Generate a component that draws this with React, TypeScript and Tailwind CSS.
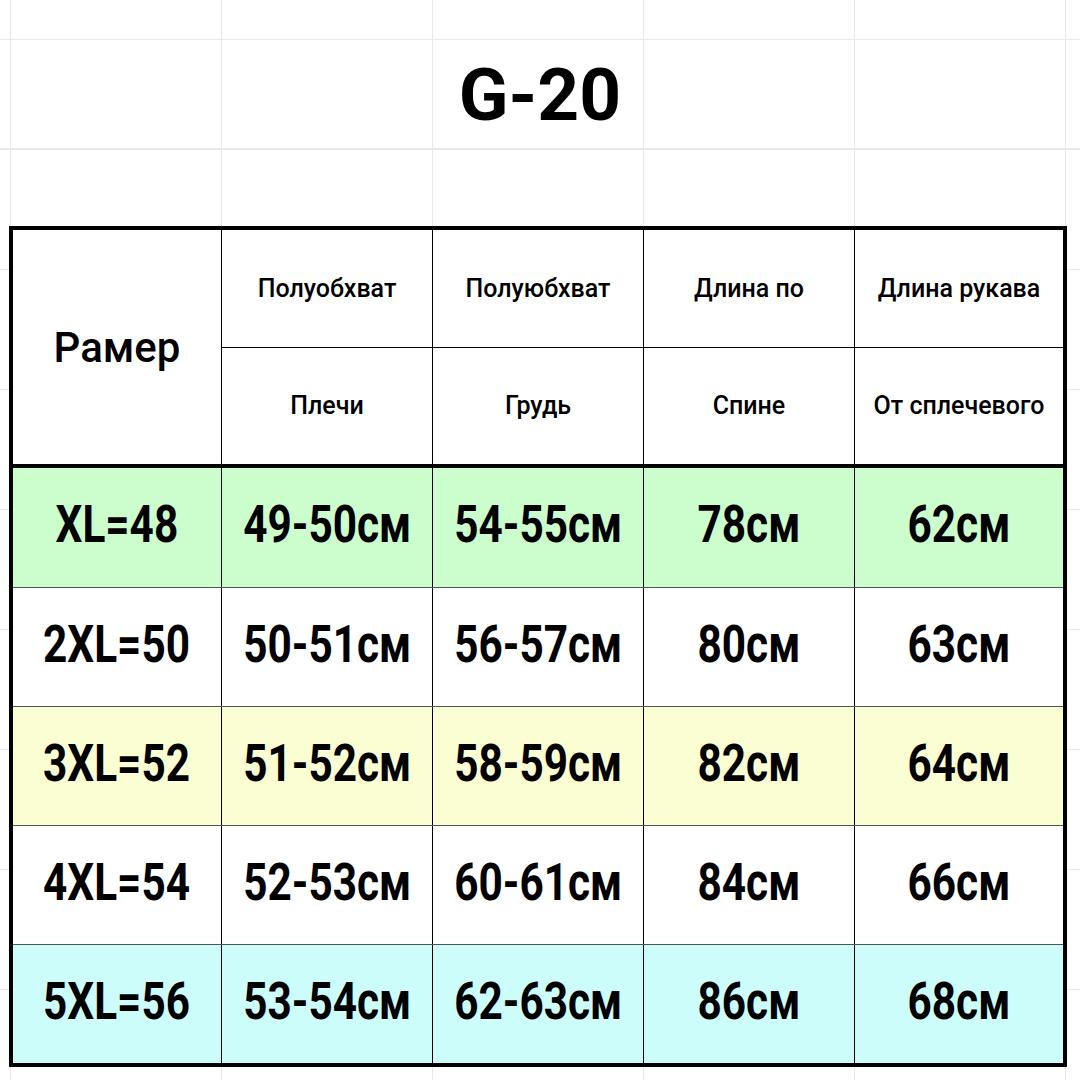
const rows = [
  { size: "XL=48", values: ["49-50см", "54-55см", "78см", "62см"], bg: "bg-[#ccfdcc]" },
  { size: "2XL=50", values: ["50-51см", "56-57см", "80см", "63см"], bg: "bg-white" },
  { size: "3XL=52", values: ["51-52см", "58-59см", "82см", "64см"], bg: "bg-[#fbfdd2]" },
  { size: "4XL=54", values: ["52-53см", "60-61см", "84см", "66см"], bg: "bg-white" },
  { size: "5XL=56", values: ["53-54см", "62-63см", "86см", "68см"], bg: "bg-[#cdfdfb]" },
]

const headers = [
  ["Полуобхват", "Плечи"],
  ["Полуюбхват", "Грудь"],
  ["Длина по", "Спине"],
  ["Длина рукава", "От сплечевого"],
]

const cols = "grid grid-cols-[208px_211px_211px_211px_209px]"

export default function App() {
  return (
    <div
      className="w-[1080px] h-[1080px] overflow-hidden bg-white text-black bg-[linear-gradient(to_right,#e9e9e9_1px,transparent_1px)] bg-[size:211px_100%] bg-[position:10px_0]"
      style={{ fontFamily: "Roboto, 'Noto Sans', sans-serif" }}
    >
      {/* sheet rows above the table */}
      <div className="h-[40px] border-b border-[#e9e9e9]" />
      <div className="h-[109px] border-b border-[#e9e9e9] flex items-center justify-center">
        <h1 className="text-[73px] font-bold leading-none pt-[2px]">G-20</h1>
      </div>

      <div className="pt-[77px] h-[931px] bg-[linear-gradient(to_bottom,#e9e9e9_1px,transparent_1px)] bg-[size:100%_120px] bg-[position:0_0]">
        <div className="ml-[9px] w-[1058px] border-4 border-black bg-white">
          {/* header */}
          <div className={`${cols} h-[238px] border-b-4 border-black`}>
            <div className="flex items-center justify-center">
              <span className="text-[42px] font-medium">Рамер</span>
            </div>
            {headers.map(([top, bottom]) => (
              <div key={top} className="flex flex-col border-l border-black">
                <div className="flex-1 flex items-center justify-center border-b border-black">
                  <span className="text-[25px] font-medium">{top}</span>
                </div>
                <div className="flex-1 flex items-center justify-center">
                  <span className="text-[25px] font-medium">{bottom}</span>
                </div>
              </div>
            ))}
          </div>

          {/* data rows */}
          {rows.map((row, i) => (
            <div
              key={row.size}
              className={`${cols} h-[119px] ${row.bg} ${i > 0 ? "border-t border-[#4d5754]" : ""}`}
            >
              <div className="flex items-center justify-center">
                <span className="text-[51px] font-bold scale-x-[0.83] pb-[4px]">{row.size}</span>
              </div>
              {row.values.map((v, j) => (
                <div key={j} className="flex items-center justify-center border-l border-black">
                  <span className="text-[51px] font-bold scale-x-[0.83] pb-[4px]">{v}</span>
                </div>
              ))}
            </div>
          ))}
        </div>
      </div>
    </div>
  )
}
